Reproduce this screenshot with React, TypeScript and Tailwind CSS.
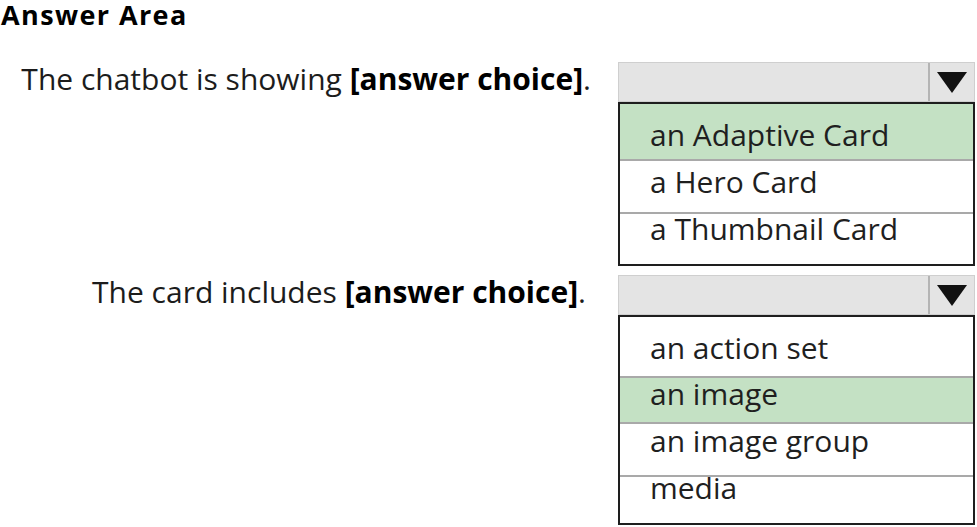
import React from "react";

const font = { fontFamily: '"Open Sans", "Noto Sans", sans-serif' };

function Arrow() {
   return (
      <svg width="30" height="21" viewBox="0 0 30 21" aria-hidden="true">
         <polygon points="0,0 30,0 15,21" fill="#111" />
      </svg>
   );
}

interface Option {
   label: string;
   selected?: boolean;
   cls: string;
}

function Dropdown({ options }: { options: Option[] }) {
   return (
      <div className="w-[357px]">
         {/* closed select bar */}
         <div className="flex h-[40px] border border-[#cfcfcf] bg-[#e4e4e4]">
            <div className="flex-1" />
            <div className="flex w-[46px] items-center justify-center border-l-2 border-[#b4b4b4]">
               <Arrow />
            </div>
         </div>
         {/* open list */}
         <div className="border-2 border-[#1e1e1e] bg-white">
            {options.map((o, i) => (
               <div
                  key={o.label}
                  className={`flex items-start pl-[30px] text-[30px] text-[#1f1f1f] ${
                     o.selected ? "bg-[#c4e1c4]" : "bg-white"
                  } ${i > 0 ? "border-t-2 border-[#a9a9a9]" : ""} ${o.cls}`}
               >
                  {o.label}
               </div>
            ))}
         </div>
      </div>
   );
}

function Row({ label, pr, options }: { label: string; pr: string; options: Option[] }) {
   return (
      <div className="flex gap-[27px]">
         <div
            className={`flex h-[40px] w-[591px] items-center justify-end pb-[6px] text-[30px] leading-none text-[#1c1c1c] ${pr}`}
         >
            <span>
               {label} <b className="font-bold text-black">[answer choice]</b>.
            </span>
         </div>
         <Dropdown options={options} />
      </div>
   );
}

export default function App() {
   return (
      <div className="h-[527px] w-[977px] overflow-hidden bg-white" style={font}>
         <h1 className="h-[30px] pl-[1px] text-[27px] font-bold leading-[30px] tracking-[1.4px] text-black">
            Answer Area
         </h1>
         <div className="mt-[32px] flex flex-col gap-[9px]">
            <Row
               label="The chatbot is showing"
               pr="pr-0"
               options={[
                  { label: "an Adaptive Card", selected: true, cls: "h-[55px] pt-[16px] leading-none" },
                  { label: "a Hero Card", cls: "h-[53px] pt-[6px] leading-none" },
                  { label: "a Thumbnail Card", cls: "h-[52px] pt-0 leading-none" },
               ]}
            />
            <Row
               label="The card includes"
               pr="pr-[5px]"
               options={[
                  { label: "an action set", cls: "h-[59px] pt-[16px] leading-none" },
                  { label: "an image", selected: true, cls: "h-[46px] pt-[1px] leading-none" },
                  { label: "an image group", cls: "h-[53px] pt-[2px] leading-none" },
                  { label: "media", cls: "h-[48px] pt-0 leading-[22px]" },
               ]}
            />
         </div>
      </div>
   );
}
